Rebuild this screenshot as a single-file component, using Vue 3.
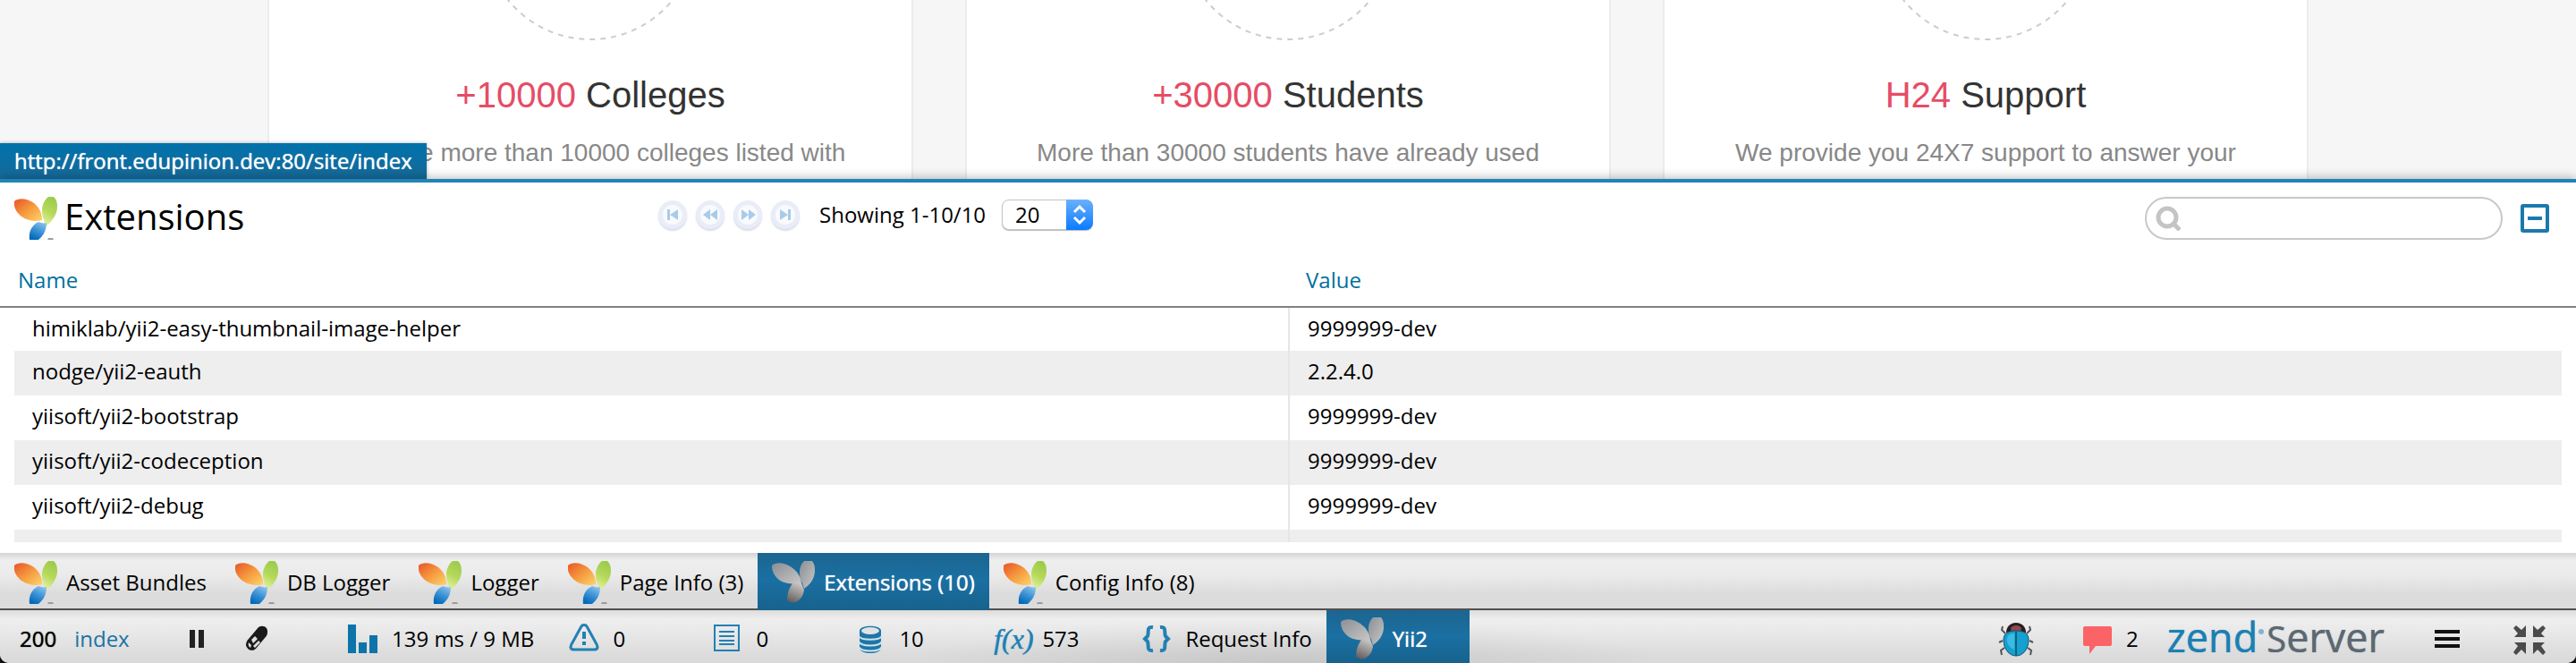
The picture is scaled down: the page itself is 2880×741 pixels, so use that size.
<script setup>
import { ref } from 'vue'

const cards = [
  { accent: '+10000', title: 'Colleges', text: 'We have more than 10000 colleges listed with' },
  { accent: '+30000', title: 'Students', text: 'More than 30000 students have already used' },
  { accent: 'H24', title: 'Support', text: 'We provide you 24X7 support to answer your' },
]

const rows = [
  ['himiklab/yii2-easy-thumbnail-image-helper', '9999999-dev'],
  ['nodge/yii2-eauth', '2.2.4.0'],
  ['yiisoft/yii2-bootstrap', '9999999-dev'],
  ['yiisoft/yii2-codeception', '9999999-dev'],
  ['yiisoft/yii2-debug', '9999999-dev'],
  ['yiisoft/yii2-faker', '9999999-dev'],
]

const pagers = [
  { label: 'First page', d: 'M10 10h3v12h-3zM22 10v12l-9-6z' },
  { label: 'Previous page', d: 'M16 10v12l-8-6zM24 10v12l-8-6z' },
  { label: 'Next page', d: 'M9 10v12l8-6zM17 10v12l8-6z' },
  { label: 'Last page', d: 'M10 10v12l9-6zM19 10h3v12h-3z' },
]

const tabs = ['Asset Bundles', 'DB Logger', 'Logger', 'Page Info (3)', 'Extensions (10)', 'Config Info (8)']
const activeTab = ref('Extensions (10)')
const query = ref('')
const pageSize = ref('20')
</script>

<template>
  <div class="app">
    <svg class="defs" aria-hidden="true">
      <defs>
        <linearGradient id="yo" x1="0" y1="0" x2="1" y2="1">
          <stop offset="0" stop-color="#e8542a" /><stop offset=".5" stop-color="#f59a3e" /><stop offset="1" stop-color="#ffd36b" />
        </linearGradient>
        <linearGradient id="yg" x1=".6" y1="0" x2=".3" y2="1">
          <stop offset="0" stop-color="#9bcb4c" /><stop offset=".5" stop-color="#b5d95a" /><stop offset="1" stop-color="#e6f3a6" />
        </linearGradient>
        <linearGradient id="yb" x1=".8" y1="0" x2=".3" y2="1">
          <stop offset="0" stop-color="#8fc4ee" /><stop offset=".5" stop-color="#3f93d6" /><stop offset="1" stop-color="#0069b8" />
        </linearGradient>
        <linearGradient id="ys" x1="0" y1="0" x2="1" y2="1">
          <stop offset="0" stop-color="#8a8f94" /><stop offset="1" stop-color="#c9c7c6" />
        </linearGradient>
        <linearGradient id="yd" x1=".7" y1="0" x2=".3" y2="1">
          <stop offset="0" stop-color="#c9c7c6" /><stop offset="1" stop-color="#64605f" />
        </linearGradient>
        <symbol id="yii" viewBox="0 0 48 48">
          <path d="M0 5C4 1 14 1 22 7c6 5 9 11 9 19-6 2-16 1-23-4C3 18 0 13 0 9z" fill="url(#yo)" />
          <path d="M38 0h6c3 3 4 6 4 11 0 8-5 16-13 22-1-6-4-10-4-18 0-6 3-12 7-15z" fill="url(#yg)" />
          <path d="M27 28c3 1 6 2 9 1 0 8-3 14-9 19H17c-1-9 2-16 10-20z" fill="url(#yb)" />
          <path d="M38 46h5l1 2h-7z" fill="#a09a98" />
        </symbol>
        <symbol id="yii-mono" viewBox="0 0 48 48">
          <path d="M0 5C4 1 14 1 22 7c7 5 11 12 11 18-8 1-18 1-25-4C3 17 0 12 0 5z" fill="url(#ys)" />
          <path d="M36 0h9c3 4 3 7 3 11 0 9-6 16-12 20-2-8-5-11-5-18 0-6 2-10 5-13z" fill="url(#ys)" />
          <path d="M23 25l10 0 3 7c-1 8-5 12-10 14-4 1-6 0-9-2 0-8 2-13 6-19z" fill="url(#yd)" />
        </symbol>
      </defs>
    </svg>

    <main class="hero">
      <article v-for="card in cards" :key="card.title" class="card">
        <svg class="ring" viewBox="0 0 240 240" aria-hidden="true"><circle cx="120" cy="120" r="118" /></svg>
        <h2><span class="accent">{{ card.accent }}</span> {{ card.title }}</h2>
        <p>{{ card.text }}</p>
      </article>
      <div class="url">http://front.edupinion.dev:80/site/index</div>
    </main>

    <section class="panel">
      <header class="panel-head">
        <div class="title">
          <svg class="logo"><use href="#yii" /></svg>
          <h1>Extensions</h1>
        </div>
        <div class="paging">
          <button v-for="p in pagers" :key="p.label" class="pager" :aria-label="p.label">
            <svg viewBox="0 0 32 32"><path :d="p.d" /></svg>
          </button>
          <label class="showing" for="size">Showing 1-10/10</label>
          <span class="select">
            <select id="size" v-model="pageSize">
              <option>20</option>
              <option>50</option>
            </select>
            <svg class="arrows" viewBox="0 0 30 34" aria-hidden="true"><path d="M9 14l6-6 6 6M9 20l6 6 6-6" /></svg>
          </span>
        </div>
        <div class="tools">
          <div class="search">
            <svg viewBox="0 0 28 28" aria-hidden="true"><circle cx="13" cy="13" r="10" /><path d="M20 20l7 7" /></svg>
            <input v-model="query" type="search" aria-label="Search extensions" />
          </div>
          <button class="collapse" aria-label="Collapse">
            <svg viewBox="0 0 32 32"><rect x="2" y="2" width="28" height="28" rx="1" /><path d="M8 16h16" /></svg>
          </button>
        </div>
      </header>
      <div class="grid">
        <table>
          <thead>
            <tr><th>Name</th><th>Value</th></tr>
          </thead>
          <tbody>
            <tr v-for="row in rows" :key="row[0]"><td>{{ row[0] }}</td><td>{{ row[1] }}</td></tr>
          </tbody>
        </table>
      </div>
    </section>

    <nav class="tabs">
      <button v-for="tab in tabs" :key="tab" class="tab" :class="{ active: tab === activeTab }" @click="activeTab = tab">
        <svg class="logo"><use :href="tab === activeTab ? '#yii-mono' : '#yii'" /></svg>
        <span>{{ tab }}</span>
      </button>
    </nav>

    <footer class="bar">
      <div class="route"><strong>200</strong><a href="#">index</a></div>
      <button class="plain" aria-label="Pause">
        <svg viewBox="0 0 48 48"><path fill="#222" d="M16 16h6v20h-6zM26 16h6v20h-6z" /></svg>
      </button>
      <button class="plain pill" aria-label="Clear cache">
        <svg viewBox="0 0 48 48">
          <path d="M26 13c5-3 11 0 10 6 0 2-1 4-3 6L23 37c-4 4-10 1-11-4 0-3 1-5 3-7z" fill="#1a1a1a" />
          <path d="M18 27l4-4 3 3-5 5zM26 28l2 2-6 6-2-2zM15 30l3 3-1 3c-2-1-3-4-2-6z" fill="#dedede" />
        </svg>
      </button>
      <button class="stat">
        <svg viewBox="0 0 48 48"><path fill="#0d74a9" d="M7 10h9v32H7zM19 30h9v12h-9zM31 22h9v20h-9z" /></svg>
        <span>139 ms / 9 MB</span>
      </button>
      <button class="stat">
        <svg viewBox="0 0 48 48" class="line">
          <path stroke-width="3" stroke-linejoin="round" d="M21 12c1-2 5-2 6 0l11 20c2 4 1 6-3 6H13c-4 0-5-2-3-6z" />
          <path stroke-width="4" d="M24 18v8M24 29v4" />
        </svg>
        <span>0</span>
      </button>
      <button class="stat">
        <svg viewBox="0 0 48 48" class="line">
          <path stroke-width="2" d="M10 11h27v28H10z" />
          <path stroke-width="2" d="M15 18h17M15 23h17M15 28h17M15 32h17" />
        </svg>
        <span>0</span>
      </button>
      <button class="stat">
        <svg viewBox="0 0 48 48">
          <path fill="#1c77a9" d="M12 17c0-7 24-7 24 0v19c0 8-24 8-24 0z" />
          <ellipse cx="24" cy="17" rx="10" ry="4" fill="#e2e2e2" />
          <path d="M11 23c3 5 23 5 26 0M11 29c3 6 23 6 26 0M11 35c3 6 23 6 26 0" fill="none" stroke="#d5e2ea" stroke-width="2" />
        </svg>
        <span>10</span>
      </button>
      <button class="stat">
        <i class="fx">f(x)</i>
        <span>573</span>
      </button>
      <button class="stat">
        <svg viewBox="0 0 48 48" class="line">
          <path stroke-width="4" d="M20 13c-8-1-4 6-6 10l-3 3 3 3c2 4-2 11 6 10M28 13c8-1 4 6 6 10l3 3-3 3c-2 4 2 11-6 10" />
        </svg>
        <span>Request Info</span>
      </button>
      <button class="stat current">
        <svg><use href="#yii-mono" /></svg>
        <span>Yii2</span>
      </button>

      <div class="right">
        <button class="plain bug" aria-label="Debug">
          <svg viewBox="0 0 48 48">
            <path d="M12 20l-4-4 1-4M9 28l-4 2M11 36l-4 3 1 5M36 20l4-4-1-4M39 28l4 2M37 36l4 3-1 5" fill="none" stroke="#52565a" stroke-width="2" />
            <path d="M13 19c0-6 4-11 11-11s11 5 11 11z" fill="#2b1d20" />
            <ellipse cx="24" cy="15" rx="6" ry="4" fill="#8c4a52" />
            <path d="M10 27c0-7 5-10 14-10s14 3 14 10c0 10-6 18-14 18s-14-8-14-18z" fill="#15a0cf" stroke="#17506b" />
            <path d="M14 25c1-4 4-5 8-5v18c-5-2-9-7-8-13z" fill="#3bbce4" />
            <path d="M24 18v27" stroke="#12607f" stroke-width="2" />
          </svg>
        </button>
        <button class="stat messages">
          <svg viewBox="0 0 48 48"><path fill="#fb6366" d="M10 12h28q2 0 2 2v18q0 2-2 2H22l-7 9v-9h-5q-2 0-2-2V14q0-2 2-2z" /></svg>
          <span>2</span>
        </button>
        <div class="brand"><span class="zend">zend</span><span class="dot"></span><span class="server"><span class="cap">S</span>erver</span></div>
        <button class="plain menu" aria-label="Menu">
          <svg viewBox="0 0 48 48"><path fill="#111" d="M10 16h28v4H10zM10 24h28v4H10zM10 32h28v4H10z" /></svg>
        </button>
        <button class="plain shrink" aria-label="Exit full screen">
          <svg viewBox="0 0 48 48">
            <path fill="#4b4b4b" d="M20 24H7l4-4-5-6 3-3 6 5 5-5zM28 24h13l-4-4 5-6-3-3-6 5-5-5zM20 30H7l4 4-5 7 3 3 6-6 5 5zM28 30h13l-4 4 5 7-3 3-6-6-5 5z" />
          </svg>
        </button>
      </div>
    </footer>
  </div>
</template>

<style>
body {
  background: #111;
}
</style>

<style scoped>
.app {
  display: flex;
  flex-direction: column;
  height: 100vh;
  overflow: hidden;
  border-radius: 0 0 10px 10px;
  background: #f6f6f6;
  color: #000;
  font-family: "Open Sans", "Noto Sans", sans-serif;
  font-size: 24px;
  line-height: 32px;
}
.defs {
  position: absolute;
  width: 0;
  height: 0;
}
button {
  margin: 0;
  padding: 0;
  border: 0;
  background: none;
  color: inherit;
  font: inherit;
}
h1,
h2,
p {
  margin: 0;
  font-weight: 400;
}
.logo {
  width: 48px;
  height: 48px;
}

.hero {
  position: relative;
  display: flex;
  justify-content: center;
  gap: 58px;
  flex: none;
  overflow: hidden;
}
.card {
  box-sizing: border-box;
  width: 722px;
  padding-bottom: 9px;
  border: solid #ececec;
  border-width: 0 2px;
  background: #fff;
  font-family: "Liberation Sans", Arial, sans-serif;
  text-align: center;
}
.ring {
  display: block;
  width: 240px;
  height: 240px;
  margin: -194px auto 36px;
  fill: none;
  stroke: #ccc;
  stroke-width: 2;
  stroke-dasharray: 6 6;
}
.card h2 {
  color: #333;
  font-size: 40px;
  line-height: 48px;
}
.accent {
  color: #e64c66;
}
.card p {
  padding-top: 21px;
  color: #888;
  font-size: 28px;
  line-height: 40px;
}
.url {
  position: absolute;
  left: 0;
  bottom: 0;
  padding: 4px 16px;
  background: linear-gradient(#0072ab, #176a99);
  box-shadow: 0 0 4px rgba(0, 0, 0, 0.3);
  color: #fff;
  text-shadow: 0 0 1px #fff;
}

.panel {
  position: relative;
  display: flex;
  flex: 1;
  flex-direction: column;
  min-height: 0;
  padding-bottom: 12px;
  border-top: 4px solid #2085b5;
  background: #fff;
  box-shadow: 0 -2px 10px rgba(0, 0, 0, 0.25);
}
.panel-head {
  display: grid;
  grid-template-columns: 25% 1fr auto;
  align-items: center;
  padding: 16px 0;
}
.title {
  display: flex;
  gap: 8px;
  padding-left: 16px;
}
.title h1 {
  font-size: 40px;
  line-height: 44px;
}
.paging {
  display: flex;
  align-items: center;
  gap: 10px;
  padding: 0 0 8px 16px;
}
.pager {
  width: 32px;
  height: 32px;
  border: 5px solid #e9edf7;
  border-radius: 50%;
  background: #f8fafd;
  box-shadow: 0 2px 2px #d8dcea;
}
.pager svg {
  display: block;
  width: 32px;
  height: 32px;
  margin: -5px;
}
.pager path {
  fill: #a9cbe8;
}
.showing {
  margin: 0 8px 0 12px;
}
.select {
  position: relative;
  display: flex;
}
.select select {
  width: 102px;
  height: 34px;
  padding: 0 14px;
  border: 1px solid #c4c4c4;
  border-radius: 8px;
  appearance: none;
  background: #fff;
  box-shadow: 0 1px 1px #bbb;
  color: #000;
  font: inherit;
  line-height: 32px;
}
.arrows {
  position: absolute;
  top: 0;
  right: 0;
  width: 30px;
  height: 34px;
  border-radius: 0 8px 8px 0;
  background: linear-gradient(#6bb1fb, #0a7bff);
  fill: none;
  stroke: #fff;
  stroke-width: 3;
  pointer-events: none;
}
.tools {
  display: flex;
  align-items: center;
  gap: 20px;
  padding-right: 30px;
}
.search {
  box-sizing: border-box;
  display: flex;
  align-items: center;
  width: 400px;
  height: 48px;
  padding: 0 20px 0 10px;
  border: 2px solid #c8c8c8;
  border-radius: 24px;
}
.search svg {
  width: 28px;
  height: 28px;
  fill: none;
  stroke: #c4c4c4;
  stroke-width: 5;
}
.search input {
  flex: 1;
  min-width: 0;
  border: 0;
  outline: 0;
  background: none;
  font: inherit;
}
.collapse svg {
  display: block;
  width: 32px;
  height: 32px;
  fill: none;
  stroke: #1b79ad;
  stroke-width: 4;
}

.grid {
  flex: 1;
  min-height: 0;
  overflow: hidden;
}
table {
  width: 100%;
  border-spacing: 0;
  table-layout: fixed;
}
th {
  padding: 13px 20px;
  border-bottom: 2px solid #808080;
  color: #006f9f;
  font-weight: 400;
  text-align: left;
}
td {
  padding: 7px 20px 11px;
}
td:first-child {
  border-left: 16px solid #fff;
}
td:last-child {
  border-left: 2px solid #e6e6e6;
  border-right: 16px solid #fff;
}
tbody tr:first-child td {
  padding-bottom: 9px;
}
tbody tr:nth-child(even) {
  background: #eee;
}

.tabs {
  position: relative;
  display: flex;
  flex: none;
  background: linear-gradient(#d4d4d4, #eee 8px, #ebebeb 24px, #dcdcdc 46px, #dcdcdc);
  box-shadow: inset 0 -2px #505050;
}
.tab {
  display: flex;
  align-items: center;
  gap: 10px;
  height: 64px;
  padding: 2px 16px 0;
}
.tab.active,
.current {
  background: linear-gradient(#1c6591, #1a70a2 30px, #17628d);
  color: #fff;
  text-shadow: 0 0 1px #fff;
}

.bar {
  display: flex;
  flex: none;
  height: 59px;
  background:
    radial-gradient(ellipse 420px 50px at 50% 100%, rgba(0, 0, 0, 0.09), transparent),
    linear-gradient(#dcdcdc, #eee 10px, #e8e8e8 26px, #dcdcdc 50px, #dadada);
}
.bar > *,
.right > * {
  box-sizing: border-box;
  padding-top: 5px;
}
.bar svg {
  flex: none;
  width: 48px;
  height: 48px;
}
.route {
  display: flex;
  align-items: center;
  gap: 20px;
  width: 196px;
  padding-left: 22px;
}
.route strong {
  font-weight: 400;
  text-shadow: 0 0 1px #000;
}
.route a {
  color: #1a72a6;
  text-decoration: none;
}
.plain {
  display: flex;
  align-items: center;
}
.plain svg {
  margin-top: -4px;
}
.pill {
  margin: 0 55px 0 19px;
}
.bar .stat {
  display: flex;
  align-items: center;
  gap: 8px;
  min-width: 160px;
  padding: 5px 16px 0;
}
.stat svg {
  margin-top: -4px;
}
.bar .current {
  gap: 10px;
}
.bar .current svg {
  margin-top: 0;
}
.line {
  fill: none;
  stroke: #2380b4;
}
.fx {
  width: 48px;
  color: #2380b4;
  font-family: "Liberation Serif", serif;
  font-size: 32px;
  text-align: center;
  text-shadow: 0 0 1px #2380b4;
}
.bar .right {
  display: flex;
  margin-left: auto;
  padding: 0 28px 0 0;
}
.bar .messages {
  min-width: 0;
}
.bug {
  margin-right: 27px;
}
.brand {
  display: flex;
  margin: 0 46px 0 16px;
  font-size: 45px;
  line-height: 50px;
}
.zend {
  color: #1d7fb3;
  text-shadow: 0 0 1px #1d7fb3;
}
.dot {
  width: 6px;
  height: 6px;
  margin: 16px 3px 0 1px;
  border-radius: 50%;
  background: #7fb4d3;
}
.server {
  color: #5c6873;
  text-shadow: 0 0 1px #5c6873;
}
.cap {
  font-size: 40px;
}
.menu {
  margin-right: 44px;
}
</style>
